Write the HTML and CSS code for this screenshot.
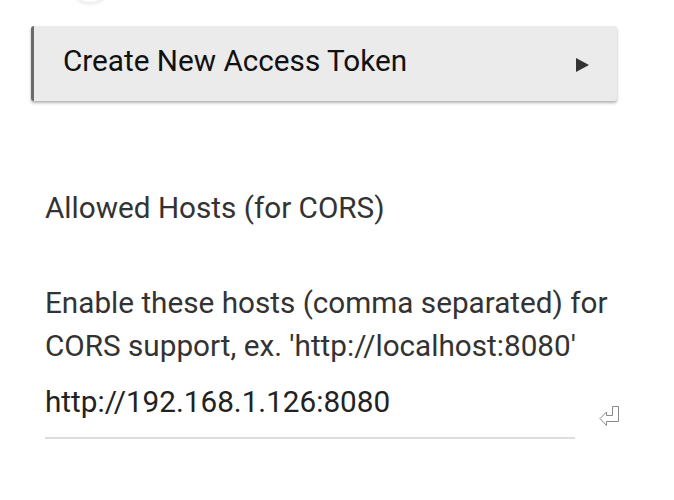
FILE: index.html
```html
<!DOCTYPE html>
<html lang="en">
<head>
  <meta charset="UTF-8" />
  <meta name="viewport" content="width=device-width, initial-scale=1.0"/>
  <title>Access Settings</title>
  <link rel="stylesheet" href="styles.css">
</head>
<body>
  <!-- round button scrolled mostly out of view -->
  <div class="fab"></div>

  <main>
    <!-- Token section -->
    <div class="token-row">
      <span class="token-label">Create New Access Token</span>
      <span class="caret"></span>
    </div>

    <!-- CORS section -->
    <section class="cors">
      <h2>Allowed Hosts (for CORS)</h2>
      <p class="hint">Enable these hosts (comma separated) for CORS support, ex. 'http://localhost:8080'</p>
      <div class="field">
        <div class="input">http://192.168.1.126:8080</div>
        <svg class="enter" width="21" height="22" viewBox="0 0 21 22">
          <path d="M13.5 1.5 H19.5 V16.5 H7.5 V20.5 L1 13.5 L7.5 7 V10.5 H13.5 Z" fill="#fff" stroke="#888" stroke-width="1"/>
        </svg>
      </div>
    </section>
  </main>
</body>
</html>
```

FILE: styles.css
```css
body {
  font-family: Roboto, "Noto Sans", sans-serif;
  margin: 0;
  padding: 0;
  background: #fff;
  color: #333;
  overflow: hidden;
}

.fab {
  width: 40px;
  height: 40px;
  margin: -38px 0 0 70px;
  border-radius: 50%;
  background: #fff;
  box-shadow: 0 2px 4px rgba(0,0,0,0.1);
}

main {
  padding: 0;
}

.token-row {
  display: flex;
  align-items: center;
  justify-content: space-between;
  height: 75px;
  margin: 24px 57px 0 31px;
  padding: 0 28px 0 29px;
  background: #ebebeb;
  border-left: 3px solid #6a6a6a;
  border-radius: 3px;
  box-shadow: 0 2px 3px rgba(0,0,0,0.3);
}

.token-label {
  font-size: 29.7px;
  color: #111;
  margin-top: -6px;
}

.caret {
  width: 0;
  height: 0;
  margin-top: 2px;
  border-top: 7px solid transparent;
  border-bottom: 7px solid transparent;
  border-left: 13px solid #333;
}

.cors {
  padding: 0 45px;
}

.cors h2 {
  font-size: 29.7px;
  font-weight: normal;
  margin: 89px 0 0;
  color: #333;
}

.hint {
  font-size: 29.7px;
  line-height: 43px;
  margin: 56px 0 0;
  color: #333;
}

.field {
  display: flex;
  align-items: flex-end;
  gap: 24px;
  margin-top: 13px;
}

.input {
  width: 530px;
  font-size: 29.7px;
  line-height: 43px;
  color: #222;
  padding-bottom: 14px;
  border-bottom: 2px solid #ddd;
}

.enter {
  margin-bottom: 12px;
}
```
